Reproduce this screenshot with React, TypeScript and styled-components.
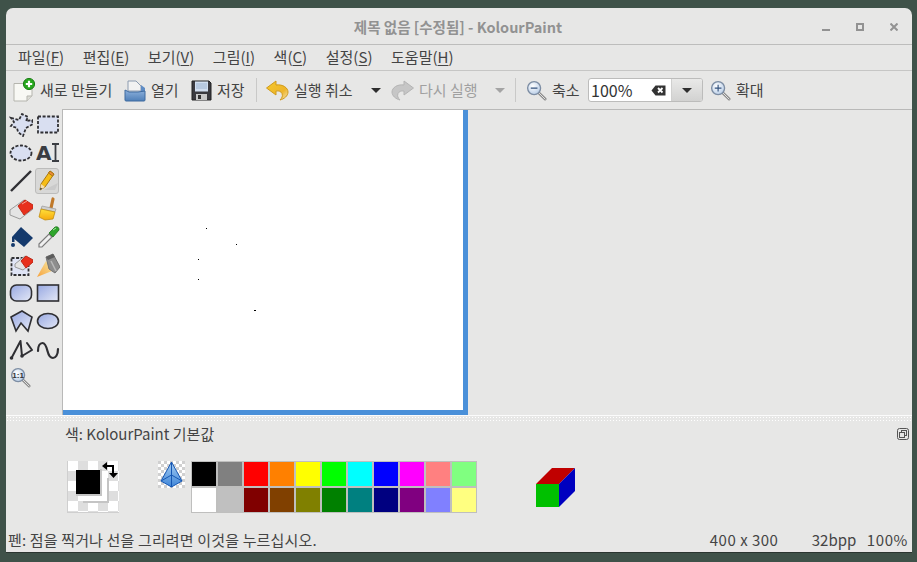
import React from 'react';
import styled, { createGlobalStyle } from 'styled-components';

const GlobalStyle = createGlobalStyle`
  html, body {
    margin: 0;
    padding: 0;
    height: 562px;
    overflow: hidden;
    background: #3f5249;
    font-family: "Noto Sans CJK KR", "Noto Sans", sans-serif;
  }
`;

const Desktop = styled.div`
  width: 917px;
  height: 562px;
  padding: 8px 5px 10px 6px;
  box-sizing: border-box;
`;

const Window = styled.div`
  height: 544px;
  display: flex;
  flex-direction: column;
  background: #e7e7e6;
  color: #444;
  border-radius: 7px 7px 0 0;
  box-shadow: 0 1px 0 #2b3530;
  font-size: 15px;
  overflow: hidden;
`;

const TitleBar = styled.div`
  flex: 0 0 36px;
  display: grid;
  grid-template-columns: 1fr auto 1fr;
  align-items: center;
  border-bottom: 1px solid #bdbdbc;
`;

const Title = styled.div`
  grid-column: 2;
  font-size: 14.500px;
  font-weight: 700;
  color: #929292;
  margin: 1px 0 0 -2px;
`;

const WindowControls = styled.div`
  justify-self: end;
  display: flex;
  align-items: center;
  gap: 26px;
  padding-right: 14px;
  margin-top: 2px;
`;

const MenuBar = styled.div`
  flex: 0 0 25px;
  display: flex;
  align-items: center;
  gap: 18.600px;
  padding-left: 12px;
  border-bottom: 1px solid #c6c6c5;
`;

const MenuItem = styled.span`
  line-height: 20px;
  margin-top: -2px;
  u {
    text-underline-offset: 2px;
  }
`;

const ToolBar = styled.div`
  flex: 0 0 38px;
  display: flex;
  align-items: center;
  padding-left: 7px;
`;

const ToolItem = styled.div<{ $width: number; $disabled?: boolean }>`
  flex: 0 0 ${p => p.$width}px;
  min-width: 0;
  display: flex;
  align-items: center;
  gap: 5px;
  color: ${p => (p.$disabled ? '#a0a0a0' : '#444')};
  white-space: nowrap;
  span {
    margin-top: -2px;
  }
`;

const DropArrow = styled.div<{ $disabled?: boolean; $width: number; $pad: number }>`
  flex: 0 0 ${p => p.$width}px;
  display: flex;
  justify-content: flex-end;
  padding-right: ${p => p.$pad}px;
  box-sizing: border-box;
  &::after {
    content: '';
    border: 5px solid transparent;
    border-bottom: 0;
    border-top: 5px solid ${p => (p.$disabled ? '#a4a4a4' : '#2e2e2e')};
  }
`;

const Separator = styled.div<{ $width: number }>`
  flex: 0 0 ${p => p.$width}px;
  height: 24px;
  display: flex;
  justify-content: center;
  &::after {
    content: '';
    width: 1px;
    background: #c9c9c8;
  }
`;

const ZoomCombo = styled.div`
  flex: 0 0 115px;
  height: 24px;
  margin: 0 7px 0 0;
  display: flex;
  box-sizing: border-box;
  border: 1px solid #bcbcbb;
  border-radius: 3px;
  background: #fff;
  overflow: hidden;
`;

const ZoomInput = styled.div`
  flex: 1;
  display: flex;
  align-items: center;
  justify-content: space-between;
  padding: 0 5px 0 2px;
  font-size: 16px;
  color: #333;
`;

const ZoomDrop = styled.div`
  flex: 0 0 30px;
  display: flex;
  align-items: center;
  justify-content: center;
  background: linear-gradient(#e9e9e8, #d2d2d1);
  border-left: 1px solid #d0d0cf;
  &::after {
    content: '';
    border: 5px solid transparent;
    border-bottom: 0;
    border-top: 5px solid #2e2e2e;
  }
`;

const Main = styled.div`
  flex: 0 0 306px;
  display: flex;
`;

const ToolBox = styled.div`
  flex: 0 0 56px;
  box-sizing: border-box;
  padding: 2px 0 0 1px;
  display: grid;
  grid-template-columns: 27px 27px;
  grid-auto-rows: 28px;
  align-content: start;
`;

const ToolCell = styled.div<{ $active?: boolean }>`
  display: flex;
  align-items: center;
  justify-content: center;
  position: relative;
  ${p =>
    p.$active &&
    `&::before {
      content: '';
      position: absolute;
      left: 1px;
      top: 1px;
      width: 24px;
      height: 26px;
      box-sizing: border-box;
      background: #d8d8d7;
      border: 1px solid #bcbcbb;
      border-radius: 3px;
    }
    svg { position: relative; }`}
`;

const ScrollArea = styled.div`
  flex: 1;
  border-left: 1px solid #b9b9b8;
  border-top: 1px solid #b9b9b8;
`;

const CanvasFrame = styled.div`
  width: 400px;
  height: 300px;
  background: #fff;
  border-right: 5px solid #4a90d9;
  border-bottom: 5px solid #4a90d9;
`;

const Splitter = styled.div`
  flex: 0 0 5px;
  border-top: 1px solid #fbfbfb;
  background: radial-gradient(circle, #fff 0.8px, transparent 1px) 0 0 / 3px 3px;
`;

const ColorPanel = styled.div`
  flex: 1;
  padding: 3px 3px 0 59px;
  display: flex;
  flex-direction: column;
`;

const PanelHeader = styled.div`
  height: 20px;
  display: flex;
  align-items: center;
  justify-content: space-between;
  line-height: 20px;
`;

const PanelBody = styled.div`
  display: flex;
  align-items: flex-start;
  margin-top: 17px;
  padding-left: 2px;
`;

const PaletteGrid = styled.div`
  display: grid;
  grid-template-columns: repeat(11, 24px);
  grid-auto-rows: 24px;
  gap: 2px;
  padding: 1px;
  background: #bfbfbe;
  margin: 0 59px 0 6px;
`;

const Swatch = styled.div<{ $color: string }>`
  background: ${p => p.$color};
`;

const StatusBar = styled.div`
  flex: 0 0 24px;
  display: flex;
  align-items: center;
  padding: 0 4px 2px 2px;
  box-sizing: border-box;
`;

const StatusText = styled.span<{ $width?: number; $track?: number }>`
  white-space: nowrap;
  letter-spacing: ${p => p.$track ?? 0}px;
  ${p => (p.$width ? `flex: 0 0 ${p.$width}px;` : 'flex: 1;')}
`;

const Icon = styled.svg`
  display: block;
  flex: none;
`;

const dark = '#2f2f33';

const GradDefs = () => (
  <svg width="0" height="0" style={{ position: 'absolute' }}>
    <defs>
      <linearGradient id="shape" x1="0" y1="0" x2="1" y2="1">
        <stop offset="0" stopColor="#97a8e2" />
        <stop offset="1" stopColor="#e4e8f6" />
      </linearGradient>
      <linearGradient id="folder" x1="0" y1="0" x2="0" y2="1">
        <stop offset="0" stopColor="#8db1dc" />
        <stop offset="1" stopColor="#4f7fb8" />
      </linearGradient>
      <linearGradient id="undo" x1="0" y1="0" x2="1" y2="1">
        <stop offset="0" stopColor="#f5c92c" />
        <stop offset="0.65" stopColor="#eeb52a" />
        <stop offset="1" stopColor="#f4e6b8" />
      </linearGradient>
      <linearGradient id="bucket" x1="0" y1="0" x2="0" y2="1">
        <stop offset="0" stopColor="#ffe13a" />
        <stop offset="1" stopColor="#f6a90e" />
      </linearGradient>
      <linearGradient id="spray" x1="1" y1="0" x2="0" y2="1">
        <stop offset="0" stopColor="#f6e6a0" />
        <stop offset="1" stopColor="#f7a23c" />
      </linearGradient>
      <radialGradient id="lens" cx="0.4" cy="0.35" r="0.7">
        <stop offset="0" stopColor="#ffffff" />
        <stop offset="1" stopColor="#b5cbe6" />
      </radialGradient>
      <linearGradient id="pyramid" x1="0" y1="0" x2="0" y2="1">
        <stop offset="0" stopColor="#a6cdf2" />
        <stop offset="1" stopColor="#3f86d8" />
      </linearGradient>
      <pattern id="check" width="6" height="6" patternUnits="userSpaceOnUse">
        <rect width="6" height="6" fill="#fff" />
        <rect width="3" height="3" fill="#d0d0d0" />
        <rect x="3" y="3" width="3" height="3" fill="#d0d0d0" />
      </pattern>
      <pattern id="check10" width="20" height="20" patternUnits="userSpaceOnUse" patternTransform="translate(1 0)">
        <rect width="20" height="20" fill="#fff" />
        <rect x="10" y="0" width="10" height="10" fill="#dedede" />
        <rect x="0" y="10" width="10" height="10" fill="#dedede" />
      </pattern>
    </defs>
  </svg>
);

const Tool = ({ children }: { children: React.ReactNode }) => (
  <Icon width="24" height="24" viewBox="0 0 24 24">
    {children}
  </Icon>
);

const Magnifier = ({ sign }: { sign: 'minus' | 'plus' | 'one' }) => (
  <Icon width="21" height="21" viewBox="0 0 22 22">
    <path d="M13 13l7 7" stroke="#8b8b8b" strokeWidth="3" strokeLinecap="round" />
    <path d="M13 13l7 7" stroke="#e4e4e4" strokeWidth="1" strokeLinecap="round" />
    <circle cx="8.500" cy="8.500" r="6.800" fill="url(#lens)" stroke="#7d8da3" strokeWidth="1.400" />
    {sign !== 'one' && <path d="M5 8.500h7" stroke="#33527e" strokeWidth="1.200" />}
    {sign === 'plus' && <path d="M8.500 5v7" stroke="#33527e" strokeWidth="1.200" />}
    {sign === 'one' && (
      <text x="8.500" y="11.500" fontSize="8.500" fontWeight="700" textAnchor="middle" fill="#333" fontFamily="Liberation Sans">
        1:1
      </text>
    )}
  </Icon>
);

const NewIcon = () => (
  <Icon width="22" height="24" viewBox="0 0 22 24">
    <path d="M1 5.500h13l5 5V18l-5 5H1z" fill="#f8f8f4" stroke="#b5b5ae" />
    <path d="M14 23v-5h5" fill="#dcdcd6" stroke="#b5b5ae" />
    <circle cx="16" cy="6" r="5.600" fill="#27a71e" stroke="#1c7f17" />
    <path d="M16 2.800v6.400M12.800 6h6.400" stroke="#fff" strokeWidth="2.200" />
  </Icon>
);

const OpenIcon = () => (
  <Icon width="22" height="23" viewBox="0 0 22 23">
    <path d="M4 12V2h8l5 5v5z" fill="#f2f2f2" stroke="#8c9bb0" />
    <path d="M17 6l4 3v4h-4z" fill="#5f8cc4" />
    <path d="M1 11l4 2h9l7-1v9a1 1 0 0 1-1 1H2a1 1 0 0 1-1-1z" fill="url(#folder)" stroke="#3e6a9f" />
  </Icon>
);

const SaveIcon = () => (
  <Icon width="21" height="21" viewBox="0 0 21 21">
    <path d="M1 1h17l2 2v17H1z" fill="#3b3b40" stroke="#222" />
    <rect x="4" y="1.500" width="13" height="10" fill="#d2dff0" />
    <path d="M5 4h11M5 6h11M5 8h11" stroke="#9db4d0" />
    <rect x="5" y="14" width="11" height="6" fill="#c9c9c9" />
    <rect x="7" y="15" width="3" height="4" fill="#333" />
  </Icon>
);

const UndoIcon = ({ gray }: { gray?: boolean }) => (
  <Icon width="23" height="21" viewBox="0 0 23 21">
    <g transform={gray ? 'translate(23 0) scale(-1 1)' : undefined}>
      <path
        d="M0.500 8L10 1v4c7-1 12 3 12 7 0 4-4 7-8 8 2-2 3-4 2-6.500-1-2-3-3-6-2.500v4z"
        fill={gray ? '#c6c6c6' : 'url(#undo)'}
        stroke={gray ? '#b4b4b4' : '#cf9a1c'}
      />
    </g>
  </Icon>
);

const ClearIcon = () => (
  <Icon width="15" height="11" viewBox="0 0 15 11">
    <path d="M0.500 5.500L4.500 0.500H14.500V10.500H4.500z" fill="#333" />
    <path d="M7 3l4.500 4.500M11.500 3L7 7.500" stroke="#fff" strokeWidth="1.800" />
  </Icon>
);

const dashed = { fill: '#d9dff1', stroke: dark, strokeWidth: 1.8, strokeDasharray: '3 1.6' };
const shape = { fill: 'url(#shape)', stroke: dark, strokeWidth: 1.6 };

const tools: { name: string; active?: boolean; icon: React.ReactNode }[] = [
  {
    name: 'free-select',
    icon: <path d="M2 5l8 2 3-6 6 3-2 4 6-1 1 4-7 4-3 8-5-4-1-4-6-2 3-4z" {...dashed} />,
  },
  { name: 'rect-select', icon: <rect x="2" y="3.500" width="20" height="16" {...dashed} /> },
  { name: 'ellipse-select', icon: <ellipse cx="12" cy="12" rx="10.500" ry="7.500" {...dashed} /> },
  {
    name: 'text',
    icon: (
      <>
        <text x="0" y="19" fontSize="20" fontWeight="700" fill="#3a3d42" fontFamily="DejaVu Sans">
          A
        </text>
        <path d="M16 3h7M16 20h7M19.500 3v17" stroke="#3a3d42" strokeWidth="1.800" fill="none" />
      </>
    ),
  },
  { name: 'line', icon: <path d="M2 22L22 2" stroke={dark} strokeWidth="2.400" /> },
  {
    name: 'pen',
    active: true,
    icon: (
      <>
        <path d="M8 21l14-7-3 7z" fill="#c4c4c4" opacity="0.7" />
        <path d="M4 21l1-6L14 2l4 3-9 13z" fill="#f6bd17" stroke="#a97812" />
        <path d="M14 2l4 3-1.500 2-4-3z" fill="#ec8a3a" stroke="#a97812" />
        <path d="M4 21l1-6 4 3z" fill="#f4dfb6" />
        <path d="M4 21l.4-2.500 1.800 1.200z" fill="#333" />
      </>
    ),
  },
  {
    name: 'eraser',
    icon: (
      <>
        <path d="M1 13L15 3l9 6v3L11 22l-10-4z" fill="#e4e4e4" stroke="#9a9a9a" />
        <path d="M9 9l7-6 8 5v3l-9 7z" fill="#e8301c" stroke="#c22a18" />
        <path d="M13 7l5-3" stroke="#f4a090" />
      </>
    ),
  },
  {
    name: 'brush',
    icon: (
      <>
        <path d="M17 2l-2 9" stroke="#c0792a" strokeWidth="3.200" strokeLinecap="round" />
        <path d="M6 9l14 3-1 3L5 12z" fill="#cfcfcf" stroke="#8e8e8e" strokeWidth="0.600" />
        <path d="M5 12l14 3-2 7-8 1-6-3z" fill="url(#bucket)" stroke="#c08d10" strokeWidth="0.800" />
      </>
    ),
  },
  {
    name: 'fill',
    icon: (
      <>
        <path d="M3 12L12 2l12 11-9 9z" fill="#14396c" />
        <path d="M3 12h2.500v5H3z" fill="#14396c" />
        <circle cx="4" cy="20" r="2" fill="#14396c" />
      </>
    ),
  },
  {
    name: 'picker',
    icon: (
      <>
        <path d="M3 19L13 9l3 3L6 22H3z" fill="#f0f0f0" stroke="#7c7c7c" strokeWidth="1.200" />
        <path d="M13 8l6-6q4-1 4 3l-6 7z" fill="#2fa52c" stroke="#1c741b" strokeWidth="0.800" />
        <path d="M17 5l3-2" stroke="#a9e6a4" />
      </>
    ),
  },
  {
    name: 'color-eraser',
    icon: (
      <>
        <rect x="2.500" y="5" width="17" height="17" fill="#dfe4f5" stroke={dark} strokeWidth="1.800" strokeDasharray="3 1.600" />
        <path d="M6 11L16 3l8 4v2l-10 8-8-3z" fill="#e4e4e4" stroke="#9a9a9a" />
        <path d="M12 8l5-5 7 4v2l-7 6z" fill="#e8301c" stroke="#c22a18" />
      </>
    ),
  },
  {
    name: 'spray',
    icon: (
      <>
        <path d="M1 24L10 8l6 10z" fill="url(#spray)" />
        <path d="M10 4l7-3 7 13-5 6-6-4z" fill="#8d8d8d" stroke="#737373" />
        <path d="M10 4l7-3 2 3-7 3z" fill="#5c5c5c" />
        <path d="M15 8l5 10" stroke="#b9b9b9" strokeWidth="1.500" />
      </>
    ),
  },
  { name: 'round-rect', icon: <rect x="1.500" y="4" width="21" height="16" rx="6" {...shape} /> },
  { name: 'rect', icon: <rect x="1.500" y="4" width="21" height="16" {...shape} /> },
  { name: 'polygon', icon: <path d="M2 8l11-6 10 6-4 14-7-8-5 8z" {...shape} /> },
  { name: 'ellipse', icon: <ellipse cx="12" cy="12" rx="10.500" ry="7.500" {...shape} /> },
  {
    name: 'polyline',
    icon: (
      <>
        <path
          d="M2.500 21l9-17 1.500 15 10-6-5-7"
          fill="none"
          stroke={dark}
          strokeWidth="2"
          strokeLinecap="round"
          strokeLinejoin="round"
        />
        <circle cx="2.500" cy="21" r="1.800" fill={dark} />
        <circle cx="13" cy="19" r="1.800" fill={dark} />
      </>
    ),
  },
  {
    name: 'curve',
    icon: (
      <path
        d="M2 14c0-5 2-8 4.500-8s4 4 5 8 3 7 5.500 7 5-3 5-9"
        fill="none"
        stroke={dark}
        strokeWidth="2.200"
        strokeLinecap="round"
      />
    ),
  },
];

const menus = [
  ['파일', 'F'],
  ['편집', 'E'],
  ['보기', 'V'],
  ['그림', 'I'],
  ['색', 'C'],
  ['설정', 'S'],
  ['도움말', 'H'],
];

const palette = [
  '#000000', '#808080', '#ff0000', '#ff8000', '#ffff00', '#00ff00', '#00ffff', '#0000ff', '#ff00ff', '#ff8080', '#80ff80',
  '#ffffff', '#c0c0c0', '#800000', '#804000', '#808000', '#008000', '#008080', '#000080', '#800080', '#8080ff', '#ffff80',
];

// a few stray pen dots on the canvas
const dots = [
  [143, 118],
  [173, 134],
  [135, 149],
  [135, 169],
  [191, 200],
];

const App: React.FC = () => {
  return (
    <Desktop>
      <GlobalStyle />
      <GradDefs />
      <Window>
        <TitleBar>
          <Title>제목 없음 [수정됨] - KolourPaint</Title>
          <WindowControls>
            <Icon width="8" height="8" viewBox="0 0 8 8">
              <path d="M0 7h8" stroke="#929292" strokeWidth="2" />
            </Icon>
            <Icon width="8" height="8" viewBox="0 0 8 8">
              <rect x="1" y="1" width="6" height="6" fill="none" stroke="#929292" strokeWidth="2" />
            </Icon>
            <Icon width="8" height="8" viewBox="0 0 8 8">
              <path d="M0.500 0.500l7 7M7.500 0.500l-7 7" stroke="#929292" strokeWidth="2" />
            </Icon>
          </WindowControls>
        </TitleBar>
        <MenuBar>
          {menus.map(([label, key]) => (
            <MenuItem key={key}>
              {label}(<u>{key}</u>)
            </MenuItem>
          ))}
        </MenuBar>
        <ToolBar>
          <ToolItem $width={111}>
            <NewIcon />
            <span>새로 만들기</span>
          </ToolItem>
          <ToolItem $width={67}>
            <OpenIcon />
            <span>열기</span>
          </ToolItem>
          <ToolItem $width={55}>
            <SaveIcon />
            <span>저장</span>
          </ToolItem>
          <Separator $width={20} />
          <ToolItem $width={85}>
            <UndoIcon />
            <span>실행 취소</span>
          </ToolItem>
          <DropArrow $width={40} $pad={10} />
          <ToolItem $width={86} $disabled>
            <UndoIcon gray />
            <span>다시 실행</span>
          </ToolItem>
          <DropArrow $width={28} $pad={0} $disabled />
          <Separator $width={21} />
          <ToolItem $width={62}>
            <Magnifier sign="minus" />
            <span>축소</span>
          </ToolItem>
          <ZoomCombo>
            <ZoomInput>
              <span>100%</span>
              <ClearIcon />
            </ZoomInput>
            <ZoomDrop />
          </ZoomCombo>
          <ToolItem $width={60}>
            <Magnifier sign="plus" />
            <span>확대</span>
          </ToolItem>
        </ToolBar>
        <Main>
          <ToolBox>
            {tools.map(tool => (
              <ToolCell key={tool.name} $active={tool.active}>
                <Tool>{tool.icon}</Tool>
              </ToolCell>
            ))}
            <ToolCell>
              <Magnifier sign="one" />
            </ToolCell>
          </ToolBox>
          <ScrollArea>
            <CanvasFrame>
              <Icon width="400" height="300" viewBox="0 0 400 300">
                {dots.map(([x, y], i) => (
                  <rect key={i} x={x} y={y} width={i === 4 ? 2 : 1} height="1" fill="#000" />
                ))}
              </Icon>
            </CanvasFrame>
          </ScrollArea>
        </Main>
        <Splitter />
        <ColorPanel>
          <PanelHeader>
            <span>색: KolourPaint 기본값</span>
            <Icon width="12" height="12" viewBox="0 0 12 12">
              <rect x="0.500" y="0.500" width="11" height="11" rx="2" fill="none" stroke="#555" />
              <rect x="4.500" y="2.500" width="5" height="5" fill="none" stroke="#555" />
              <rect x="2.500" y="4.500" width="5" height="5" fill="#e7e7e6" stroke="#555" />
            </Icon>
          </PanelHeader>
          <PanelBody>
            <Icon width="52" height="52" viewBox="0 0 52 52">
              <rect width="52" height="52" fill="url(#check10)" />
              <path d="M0.500 0v52M0 51.500h52" stroke="#cfcfcf" strokeWidth="1" />
              <rect x="16" y="17" width="24" height="23" fill="#fff" />
              <path d="M40 17h2v25H16v-2h24z" fill="#c4c4c4" />
              <rect x="9" y="9" width="24" height="24" fill="#000" />
              <path d="M33 8h2v27H9v-2h24z" fill="#c4c4c4" />
              <path d="M35 5l5-4v3h7v8h4l-4.500 5-4.500-5h3V6h-5v3z" fill="#000" />
            </Icon>
            <Icon width="27" height="27" viewBox="0 0 27 27" style={{ marginLeft: 39 }}>
              <rect width="27" height="27" fill="url(#check)" />
              <path d="M13.500 1L3 20l10.500 6L24 20z" fill="url(#pyramid)" stroke="#1657b3" />
              <path d="M13.500 1v13M3 20l10.500-6L24 20M13.500 14v12" fill="none" stroke="#1657b3" />
            </Icon>
            <PaletteGrid>
              {palette.map((color, i) => (
                <Swatch key={i} $color={color} />
              ))}
            </PaletteGrid>
            <Icon width="40" height="40" viewBox="0 0 40 40" style={{ marginTop: 7 }}>
              <path d="M0 16L16 0h23L23 16z" fill="#c00000" />
              <path d="M23 16L39 0v23L23 39z" fill="#0000c0" />
              <rect x="0" y="16" width="23" height="23" fill="#00c000" />
            </Icon>
          </PanelBody>
        </ColorPanel>
        <StatusBar>
          <StatusText $track={0.15}>펜: 점을 찍거나 선을 그리려면 이것을 누르십시오.</StatusText>
          <StatusText $width={102} $track={0.5}>400 x 300</StatusText>
          <StatusText $width={55}>32bpp</StatusText>
          <StatusText $width={41} $track={0.6}>100%</StatusText>
        </StatusBar>
      </Window>
    </Desktop>
  );
};

export default App;
